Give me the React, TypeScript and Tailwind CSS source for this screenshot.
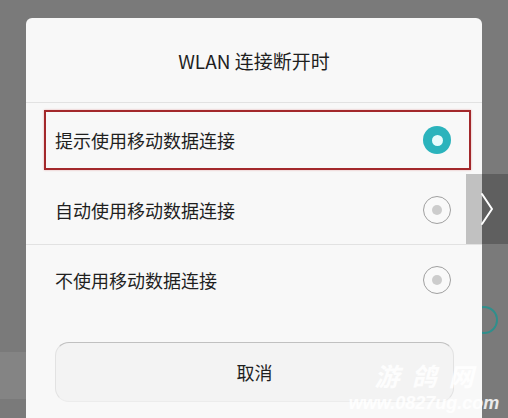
import React from "react";

const font = { fontFamily: '"Noto Sans CJK SC", "Noto Sans", sans-serif' };

function Radio({ selected }: { selected?: boolean }) {
  if (selected) {
    return (
      <div className="w-[28px] h-[28px] rounded-full bg-[#2bb3bc] flex items-center justify-center">
        <div className="w-[11px] h-[11px] rounded-full bg-[#e8fbfc]" />
      </div>
    );
  }
  return (
    <div className="w-[28px] h-[28px] rounded-full border border-[#a0a0a0] bg-[#f9f9f9] flex items-center justify-center">
      <div className="w-[10px] h-[10px] rounded-full bg-[#cccccc]" />
    </div>
  );
}

function Row({ label, selected, boxed }: { label: string; selected?: boolean; boxed?: boolean }) {
  return (
    <div className="relative h-[70px] flex items-center justify-between pl-[29px] pr-[31px]">
      <span className="text-[18px] text-[#1f1f1f] leading-none">{label}</span>
      <Radio selected={selected} />
      {boxed && (
        <div className="absolute left-[18px] right-[11px] top-[5px] bottom-[5px] border-2 border-[#a3282b] shadow-[0_0_2px_rgba(200,60,60,0.4)]" />
      )}
    </div>
  );
}

export default function App() {
  return (
    <div className="relative w-[508px] h-[418px] overflow-hidden bg-[#7a7a7a] flex" style={font}>
      {/* left strip */}
      <div className="w-[26px] flex flex-col">
        <div className="h-[352px]" />
        <div className="h-[47px] bg-[#848484]" />
      </div>

      {/* dialog */}
      <div className="relative z-10 mt-[18px] w-[456px] h-[420px] rounded-t-[6px] bg-[#f8f8f8] flex flex-col">
        <div className="h-[84px] flex items-center justify-center">
          <span className="text-[19px] text-[#1f1f1f] leading-none">WLAN 连接断开时</span>
        </div>
        <div className="h-[1px] bg-[#e2e2e2]" />
        <div className="h-[2px]" />
        <Row label="提示使用移动数据连接" selected boxed />
        <Row label="自动使用移动数据连接" />
        <div className="h-[1px] bg-[#e2e2e2] -mt-[1px]" />
        <Row label="不使用移动数据连接" />
        <div className="mt-[27px] ml-[29px] w-[399px] h-[60px] rounded-[14px] border border-[#c0c0c0] border-l-[#e2e2e2] border-r-[#e2e2e2] border-b-[#ececec] bg-[#f3f3f3] flex items-center justify-center">
          <span className="text-[18px] text-[#1f1f1f] leading-none">取消</span>
        </div>
      </div>

      {/* right strip */}
      <div className="flex-1 flex flex-col">
        <div className="h-[306px]" />
        <div className="-ml-[12px] w-[28px] h-[28px] rounded-full border-2 border-[#2f8f8c]" />
      </div>

      {/* side arrow overlay */}
      <div className="absolute z-20 left-[466px] top-[174px] w-[42px] h-[70px] bg-[rgba(0,0,0,0.22)] flex items-center justify-center">
        <svg width="16" height="36" viewBox="0 0 16 36" fill="none">
          <path d="M3 3 L13 18 L3 33" stroke="white" strokeWidth="2" strokeLinecap="round" strokeLinejoin="round" />
        </svg>
      </div>

      {/* watermark */}
      <div className="absolute z-20 left-[340px] top-[363px] w-[168px] flex flex-col items-center gap-[6px] text-white/85 italic font-bold leading-none">
        <span className="text-[25px] tracking-[12px] pl-[12px]">游鸽网</span>
        <span className="text-[18px]" style={{ fontFamily: '"Liberation Sans", sans-serif' }}>
          www.0827ug.com
        </span>
      </div>
    </div>
  );
}
